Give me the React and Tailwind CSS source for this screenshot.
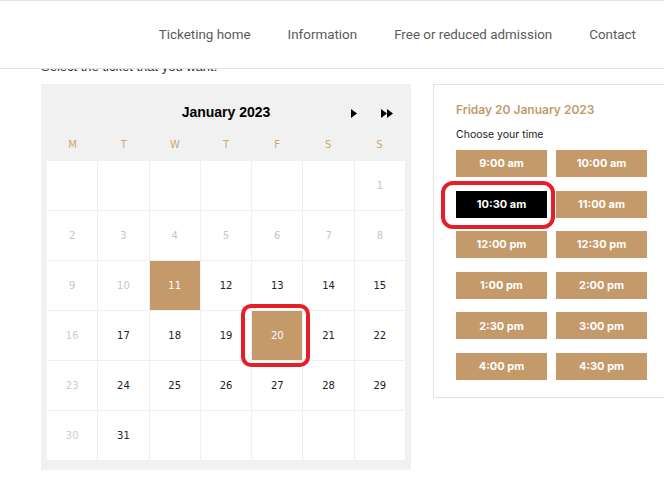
import React from 'react';

const NAV = ['Ticketing home', 'Information', 'Free or reduced admission', 'Contact'];
const WEEKDAYS = ['M', 'T', 'W', 'T', 'F', 'S', 'S'];
const TIMES = [
    '9:00 am', '10:00 am',
    '10:30 am', '11:00 am',
    '12:00 pm', '12:30 pm',
    '1:00 pm', '2:00 pm',
    '2:30 pm', '3:00 pm',
    '4:00 pm', '4:30 pm',
];

// january 2023 starts on a sunday
const cells = [...Array(6).fill(null), ...Array.from({ length: 31 }, (_, i) => i + 1)];
while (cells.length < 42) cells.push(null);

function Triangle() {
    return (
        <svg width="6" height="9" viewBox="0 0 6 9">
            <path d="M0 0 L6 4.5 L0 9 Z" fill="#000" />
        </svg>
    );
}

function DayCell({ day }) {
    if (day === null) return <div className="bg-white h-[49px]" />;

    const past = day <= 10;
    const closed = day === 16 || day === 23 || day === 30;
    const highlighted = day === 11 || day === 20;

    let cls = 'text-[#222]';
    if (past) cls = 'text-[#c6c6c6]';
    if (closed) cls = 'text-[#d3cac4]';

    return (
        <div
            className={`relative h-[49px] flex items-center justify-center ${
                highlighted ? 'bg-[#c49a6a] text-white' : `bg-white ${cls}`
            }`}
        >
            {day}
            {day === 20 && (
                <div className="absolute -left-[11px] -top-[7px] w-[69px] h-[63px] border-4 border-[#e61e28] rounded-[10px] pointer-events-none z-10" />
            )}
        </div>
    );
}

export default function App() {
    return (
        <div className="w-[664px] h-[496px] overflow-hidden bg-white font-['Liberation_Sans',Arial,sans-serif]">
            {/* header */}
            <header className="relative z-20 h-[69px] pt-[2px] bg-white border-t border-b border-[#e3e3e3] flex items-center justify-end gap-[37px] pr-[28px] font-['Roboto',sans-serif] text-[13.4px] text-[#5a5a5a]">
                {NAV.map(item => (
                    <span key={item}>{item}</span>
                ))}
            </header>

            <main className="px-[41px]">
                <p className="-mt-[10px] leading-[16px] text-[13px] text-[#333]">
                    Select the ticket that you want.
                </p>

                <div className="mt-[9px] flex gap-[22px]">
                    {/* calendar */}
                    <div className="w-[370px] shrink-0 bg-[#f1f1f1] px-[6px] pb-[10px]">
                        <div className="relative pt-[16px] h-[40px] text-center">
                            <h2 className="leading-[24px] text-[14px] font-bold text-black">January 2023</h2>
                            <div className="absolute right-[12px] top-[25px] flex items-center">
                                <Triangle />
                                <span className="ml-[24px] flex">
                                    <Triangle />
                                    <Triangle />
                                </span>
                            </div>
                        </div>
                        <div className="grid grid-cols-7 pt-[14px] pb-[9px] leading-[14px] text-[10px] text-[#cda577] font-['DejaVu_Sans',Verdana,sans-serif]">
                            {WEEKDAYS.map((d, i) => (
                                <span key={i} className="text-center">{d}</span>
                            ))}
                        </div>
                        <div className="grid grid-cols-7 gap-px bg-[#efefef] text-[10px] font-['DejaVu_Sans',Verdana,sans-serif]">
                            {cells.map((day, i) => (
                                <DayCell key={i} day={day} />
                            ))}
                        </div>
                    </div>

                    {/* time slots */}
                    <div className="w-[260px] shrink-0 h-[314px] border border-[#e3e3e3] pl-[22px] pt-[17px] font-['Inter',sans-serif]">
                        <h3 className="leading-[16px] text-[12px] font-semibold text-[#c49a6a]">
                            Friday 20 January 2023
                        </h3>
                        <p className="mt-[10px] leading-[14px] text-[10.5px] text-[#222]">Choose your time</p>
                        <div className="mt-[8px] grid grid-cols-[91px_91px] gap-x-[9px] gap-y-[13.6px]">
                            {TIMES.map(t => (
                                <div
                                    key={t}
                                    className={`relative h-[27px] flex items-center justify-center text-[11px] font-bold text-white ${
                                        t === '10:30 am' ? 'bg-black' : 'bg-[#c49a6a]'
                                    }`}
                                >
                                    {t}
                                    {t === '10:30 am' && (
                                        <div className="absolute -left-[15px] -top-[10px] w-[114px] h-[48px] border-4 border-[#e61e28] rounded-[12px] pointer-events-none" />
                                    )}
                                </div>
                            ))}
                        </div>
                    </div>
                </div>
            </main>
        </div>
    );
}
